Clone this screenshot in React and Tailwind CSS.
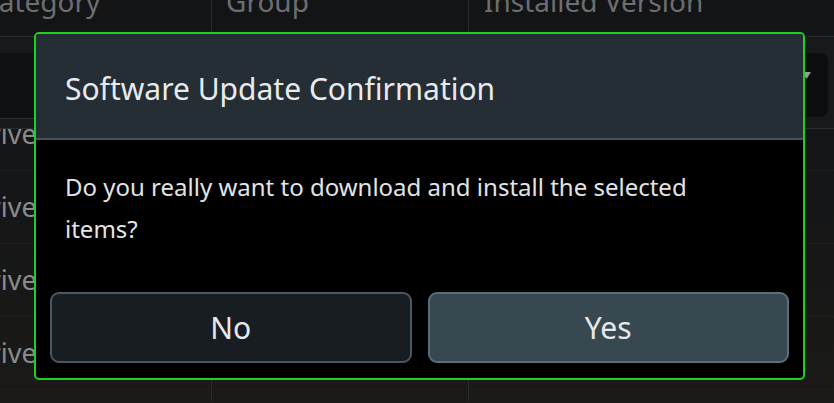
import React from 'react';

const rows = ['Drive', 'Drive', 'Drive', 'Drive', 'Drive'];

const Cell = ({ children, first, className = '' }) => (
  <div className={`${first ? '' : 'border-l border-[#2a2c2f]'} h-full overflow-hidden ${className}`}>
    {children}
  </div>
);

const App = () => {
  return (
    <div className="relative w-[834px] h-[403px] overflow-hidden bg-gradient-to-b from-[#131416] via-[#151617] to-[#1b1a17] font-['Noto_Sans',sans-serif]">
      {/* background table */}
      <div className="grid grid-cols-[211px_257px_1fr] h-[37px] border-b border-[#2a2c2f] text-[28px] leading-[28px] text-[#6c6e71]">
        <Cell first>
          <div className="-mt-[13px] -ml-[19px] whitespace-nowrap">Category</div>
        </Cell>
        <Cell>
          <div className="-mt-[13px] pl-[14px] whitespace-nowrap">Group</div>
        </Cell>
        <Cell>
          <div className="-mt-[13px] pl-[15px] whitespace-nowrap">Installed Version</div>
        </Cell>
      </div>

      <div className="h-[92px] bg-[#18191b] border-b border-[#2b2e31] flex gap-3 pt-[16px] pb-[10px]">
        <div className="w-[200px] h-[66px] bg-[#0f1113] border-b border-[#2c2f33]" />
        <div className="flex-1" />
        <div className="w-[360px] h-[64px] mr-[6px] rounded-lg bg-[#0c0e10] flex items-center justify-end pr-[17px] pb-[20px]">
          <svg width="9" height="7" viewBox="0 0 9 7">
            <polygon points="0,0 9,0 4.5,7" fill="#9a9b9c" />
          </svg>
        </div>
      </div>

      <div className="h-[273px] overflow-hidden">
        <div className="-mt-[31px]">
          {rows.map((r, i) => (
            <div key={i} className="grid grid-cols-[211px_257px_1fr] h-[73px] border-b border-[#1d1e1f] text-[27px] text-[#8a8b8c]">
              <Cell first className="flex items-center">
                <div className="-ml-[30px] whitespace-nowrap">{r}</div>
              </Cell>
              <Cell />
              <Cell />
            </div>
          ))}
        </div>
      </div>

      {/* dialog */}
      <div className="absolute left-[34px] top-[32px] w-[771px] h-[348px] border-2 border-[#20d020] rounded-[5px] bg-black flex flex-col overflow-hidden">
        <div className="h-[106px] bg-[#252d35] border-b-2 border-[#46525c] flex items-center pl-[29px] pt-[4px]">
          <span className="text-[30px] text-[#e8eaec] whitespace-nowrap">Software Update Confirmation</span>
        </div>
        <div className="flex-1 flex flex-col pt-[26px] px-[29px]">
          <p className="max-w-[650px] text-[24px] leading-[42px] text-[#e2e4e6]">
            Do you really want to download and install the selected items?
          </p>
        </div>
        <div className="flex gap-4 px-[14px] pb-[15px]">
          <button className="flex-1 h-[71px] rounded-[9px] bg-[#181d22] border-2 border-[#4b5761] text-[30px] text-[#e6e8ea]">
            No
          </button>
          <button className="flex-1 h-[71px] rounded-[9px] bg-[#384850] border-2 border-[#5c6d77] text-[30px] text-[#e6e8ea]">
            Yes
          </button>
        </div>
      </div>
    </div>
  );
};

export default App;
